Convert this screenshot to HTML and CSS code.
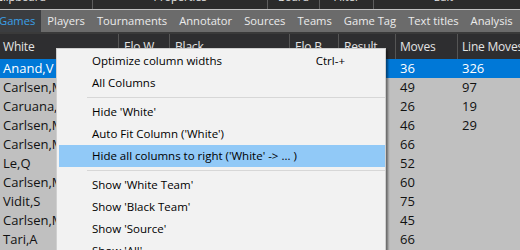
FILE: index.html
```html
<!DOCTYPE html>
<html lang="en">
<head>
  <meta charset="UTF-8" />
  <title>Games</title>
  <link rel="stylesheet" href="styles.css">
</head>
<body>
  <div class="ribbon">
    <div class="group g-clip"><span class="label">Clipboard</span></div>
    <div class="group g-props"><span class="label">Properties</span></div>
    <div class="group g-board"><span class="label">Board</span></div>
    <div class="group g-filter"><span class="label">Filter</span></div>
    <div class="group g-edit"><span class="label">Edit</span></div>
  </div>

  <nav class="tabs">
    <span class="tab active">Games</span>
    <span class="tab">Players</span>
    <span class="tab">Tournaments</span>
    <span class="tab">Annotator</span>
    <span class="tab">Sources</span>
    <span class="tab">Teams</span>
    <span class="tab">Game Tag</span>
    <span class="tab">Text titles</span>
    <span class="tab">Analysis</span>
  </nav>

  <div class="grid">
    <div class="row head">
      <span class="cell c-white">White</span>
      <span class="cell c-elow">Elo W</span>
      <span class="cell c-black">Black</span>
      <span class="cell c-elob">Elo B</span>
      <span class="cell c-result">Result</span>
      <span class="cell c-moves">Moves</span>
      <span class="cell c-line">Line Moves</span>
    </div>
    <div id="rows"></div>
  </div>

  <div class="menu">
    <div class="item"><span>Optimize column widths</span><span class="key">Ctrl-+</span></div>
    <div class="item"><span>All Columns</span></div>
    <div class="sep"></div>
    <div class="item"><span>Hide 'White'</span></div>
    <div class="item"><span>Auto Fit Column ('White')</span></div>
    <div class="item hover"><span>Hide all columns to right ('White' -&gt; ... )</span></div>
    <div class="sep"></div>
    <div class="item"><span>Show 'White Team'</span></div>
    <div class="item"><span>Show 'Black Team'</span></div>
    <div class="item"><span>Show 'Source'</span></div>
    <div class="item"><span>Show 'All'</span></div>
  </div>

  <script>
    const games = [
      ['Anand,V', 36, 326],
      ['Carlsen,M', 49, 97],
      ['Caruana,F', 26, 19],
      ['Carlsen,M', 46, 29],
      ['Carlsen,M', 66, ''],
      ['Le,Q', 52, ''],
      ['Carlsen,M', 60, ''],
      ['Vidit,S', 75, ''],
      ['Carlsen,M', 45, ''],
      ['Tari,A', 66, '']
    ];
    const rows = document.getElementById('rows');
    games.forEach((g, i) => {
      const row = document.createElement('div');
      row.className = i === 0 ? 'row selected' : 'row';
      row.innerHTML =
        `<span class="cell c-white">${g[0]}</span>` +
        '<span class="cell c-elow"></span><span class="cell c-black"></span>' +
        '<span class="cell c-elob"></span><span class="cell c-result"></span>' +
        `<span class="cell c-moves">${g[1]}</span>` +
        `<span class="cell c-line">${g[2]}</span>`;
      rows.appendChild(row);
    });
  </script>
</body>
</html>
```

FILE: styles.css
```css
body {
  margin: 0;
  padding: 0;
  width: 520px;
  height: 250px;
  overflow: hidden;
  position: relative;
  background-color: #c0c0c0;
  font-family: 'Open Sans', 'Noto Sans', sans-serif;
  font-size: 12px;
}
.ribbon {
  display: flex;
  height: 9px;
  background-color: #2b2b2b;
  overflow: hidden;
  color: #e8e8e8;
  font-size: 11px;
}
.group {
  flex: none;
  box-sizing: border-box;
  height: 9px;
  border-right: 1px solid #5e5e5e;
  text-align: center;
  white-space: nowrap;
}
.label {
  display: block;
  margin-top: -10px;
  line-height: 14px;
}
.g-clip { width: 143px; margin-left: -50px; }
.g-props { width: 175px; }
.g-board { width: 52px; }
.g-filter { width: 54px; }
.g-edit { width: 139px; border-right: none; }
.tabs {
  display: flex;
  height: 22px;
  margin-top: 1px;
  background-color: #6b6b6b;
  border-bottom: 2px solid #3a3a3a;
  white-space: nowrap;
  overflow: hidden;
}
.tab {
  flex: none;
  color: #ececec;
  padding: 0 6px;
  line-height: 22px;
  font-size: 11.2px;
}
.tab.active {
  background-color: #3b3d40;
  color: #3aa0e8;
  margin-left: -7px;
}
.grid {
  display: flex;
  flex-direction: column;
}
.row {
  display: flex;
  height: 19px;
  line-height: 19px;
  color: #111;
  font-size: 13px;
}
.row.head {
  height: 25px;
  line-height: 25px;
  background-color: #2e2e30;
  color: #e4e4e4;
  font-size: 12px;
  letter-spacing: -0.2px;
}
.row.selected {
  background-color: #0078d7;
  color: #fff;
}
.cell {
  box-sizing: border-box;
  padding-left: 5px;
  white-space: nowrap;
  overflow: hidden;
  flex: none;
}
.head .cell {
  border-right: 1px solid #555;
}
.c-white { width: 119px; padding-left: 3px; }
.c-elow { width: 51px; }
.c-black { width: 120px; }
.c-elob { width: 49px; }
.c-result { width: 57px; }
.c-moves { width: 62px; padding-left: 4px; }
.c-line { width: 80px; padding-left: 4px; }
.menu {
  position: absolute;
  left: 56px;
  top: 48px;
  width: 326px;
  padding: 1px 0 0 2px;
  background-color: #f2f2f2;
  border: 1px solid #cfcfcf;
  box-shadow: 2px 2px 2px rgba(0, 0, 0, 0.45);
  color: #000;
  font-size: 11.5px;
}
.item {
  display: flex;
  justify-content: space-between;
  height: 22px;
  line-height: 22px;
  padding-left: 33px;
  padding-right: 40px;
}
.item.hover {
  background-color: #91c9f7;
}
.key {
  color: #000;
}
.sep {
  height: 1px;
  margin: 3px 0 3px 28px;
  background-color: #d7d7d7;
}
```
